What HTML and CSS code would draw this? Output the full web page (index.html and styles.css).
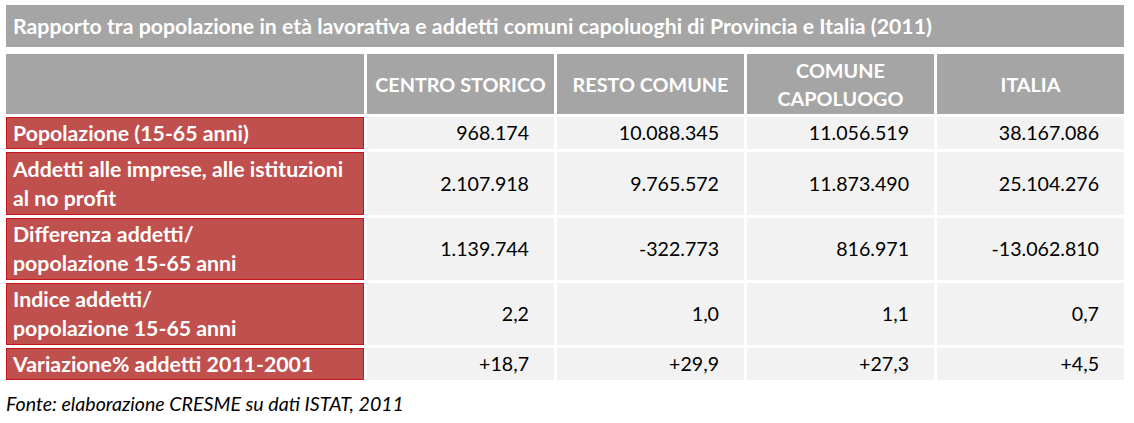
FILE: index.html
```html
<!DOCTYPE html>
<html lang="it">
<head>
<meta charset="utf-8">
<title>Rapporto tra popolazione in età lavorativa e addetti</title>
<link rel="stylesheet" href="styles.css">
</head>
<body>
<div class="page">
  <div class="title">Rapporto tra popolazione in età lavorativa e addetti comuni capoluoghi di Provincia e Italia (2011)</div>
  <div class="table">
    <div class="hd blank"></div>
    <div class="hd">CENTRO STORICO</div>
    <div class="hd">RESTO COMUNE</div>
    <div class="hd">COMUNE<br>CAPOLUOGO</div>
    <div class="hd">ITALIA</div>

    <div class="lbl">Popolazione (15-65 anni)</div>
    <div class="num">968.174</div>
    <div class="num">10.088.345</div>
    <div class="num">11.056.519</div>
    <div class="num">38.167.086</div>

    <div class="lbl">Addetti alle imprese, alle istituzioni<br>al no profit</div>
    <div class="num">2.107.918</div>
    <div class="num">9.765.572</div>
    <div class="num">11.873.490</div>
    <div class="num">25.104.276</div>

    <div class="lbl">Differenza addetti/<br>popolazione 15-65 anni</div>
    <div class="num">1.139.744</div>
    <div class="num">-322.773</div>
    <div class="num">816.971</div>
    <div class="num">-13.062.810</div>

    <div class="lbl">Indice addetti/<br>popolazione 15-65 anni</div>
    <div class="num">2,2</div>
    <div class="num">1,0</div>
    <div class="num">1,1</div>
    <div class="num">0,7</div>

    <div class="lbl">Variazione% addetti 2011-2001</div>
    <div class="num">+18,7</div>
    <div class="num">+29,9</div>
    <div class="num">+27,3</div>
    <div class="num">+4,5</div>
  </div>
  <div class="source">Fonte: elaborazione CRESME su dati ISTAT, 2011</div>
</div>
</body>
</html>
```

FILE: styles.css
```css
html, body {
  margin: 0;
  padding: 0;
  background: #ffffff;
}

.page {
  padding: 5px 0 0 6px;
  width: 1118px;
  font-family: Lato, "Open Sans", sans-serif;
}

.title {
  height: 42px;
  background: #a5a5a5;
  color: #ffffff;
  font-weight: 700;
  font-size: 21.3px;
  line-height: 42px;
  padding-left: 7px;
  white-space: nowrap;
}

.table {
  margin-top: 7px;
  display: grid;
  grid-template-columns: 358px repeat(4, 187px);
  grid-template-rows: 60px 32px 63px 62px 62px 32px;
  column-gap: 3px;
  row-gap: 3px;
}

.hd {
  background: #a5a5a5;
  color: #ffffff;
  font-weight: 700;
  font-size: 19.8px;
  line-height: 28px;
  display: flex;
  align-items: center;
  justify-content: center;
  text-align: center;
}

.lbl {
  background: #c0504d;
  border: 1px solid #c8141a;
  color: #ffffff;
  font-weight: 700;
  font-size: 21.3px;
  line-height: 29px;
  display: flex;
  align-items: center;
  padding-left: 6px;
  white-space: nowrap;
}

.num {
  background: #f2f2f2;
  color: #000000;
  font-size: 19.6px;
  line-height: 28px;
  display: flex;
  align-items: center;
  justify-content: flex-end;
  padding-right: 25px;
}

.source {
  margin-top: 12px;
  font-style: italic;
  font-size: 19.6px;
  color: #000000;
}
```
